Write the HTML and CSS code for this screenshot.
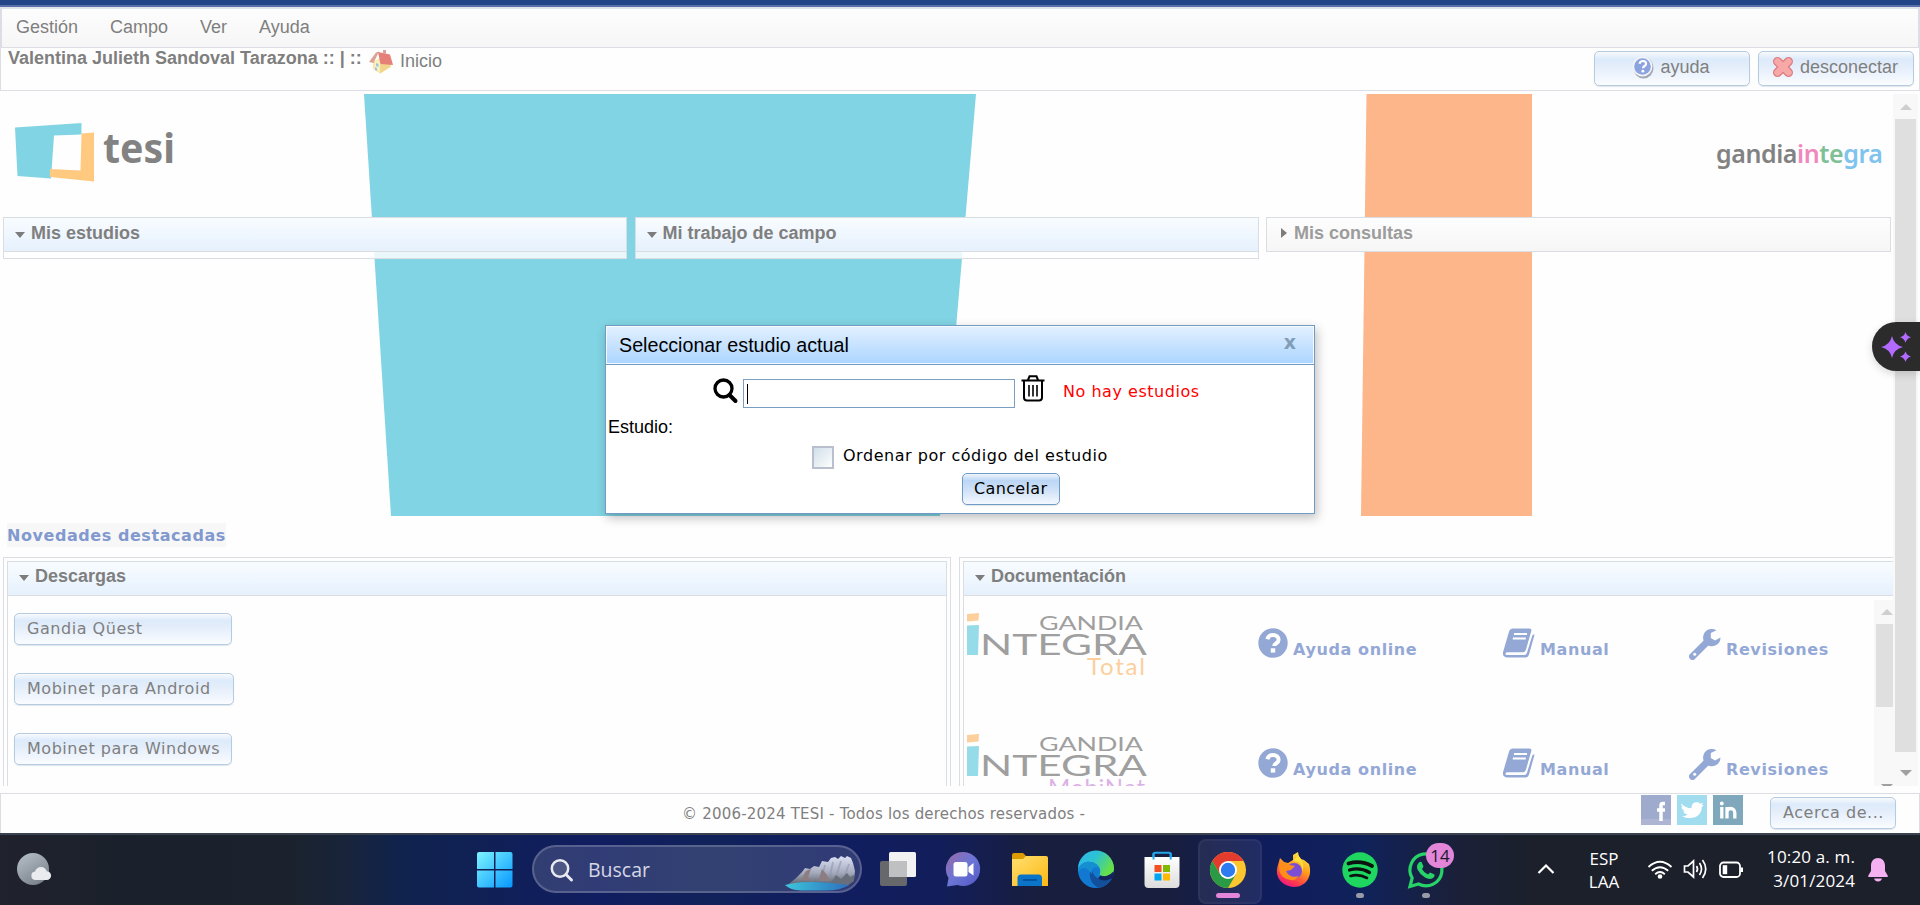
FILE: index.html
```
<!DOCTYPE html>
<html lang="es">
<head>
<meta charset="utf-8">
<title>TESI - Gandia Integra</title>
<link rel="stylesheet" href="styles.css">
</head>
<body>
<svg class="defs" width="0" height="0">
  <defs>
    <linearGradient id="winG" x1="0" y1="0" x2="1" y2="1"><stop offset="0" stop-color="#7df5ff"/><stop offset="1" stop-color="#0697ff"/></linearGradient>
    <linearGradient id="moonG" x1="0" y1="0" x2="0.6" y2="1"><stop offset="0" stop-color="#b9c2cc"/><stop offset="1" stop-color="#7c838c"/></linearGradient>
    <linearGradient id="chatG" x1="0" y1="0" x2="1" y2="1"><stop offset="0" stop-color="#9a6aa8"/><stop offset=".5" stop-color="#6b76d6"/><stop offset="1" stop-color="#5455c4"/></linearGradient>
    <linearGradient id="foldG" x1="0" y1="0" x2="1" y2="1"><stop offset="0" stop-color="#ffe071"/><stop offset="1" stop-color="#fdb813"/></linearGradient>
    <linearGradient id="edgeG" x1="0" y1="0" x2="1" y2=".5"><stop offset="0" stop-color="#2fb4f0"/><stop offset=".5" stop-color="#2cc3d3"/><stop offset="1" stop-color="#66e048"/></linearGradient>
    <linearGradient id="storeG" x1="0" y1="0" x2="0" y2="1"><stop offset="0" stop-color="#ffffff"/><stop offset="1" stop-color="#dcdcdc"/></linearGradient>
    <linearGradient id="ffG" x1=".8" y1="0" x2=".3" y2="1"><stop offset="0" stop-color="#fff04a"/><stop offset=".45" stop-color="#ff9a1c"/><stop offset=".8" stop-color="#ff3a4c"/><stop offset="1" stop-color="#e8168b"/></linearGradient>
    <linearGradient id="rockG" x1="0" y1="0" x2="0" y2="1"><stop offset="0" stop-color="#dde0f4"/><stop offset=".55" stop-color="#a6acbd"/><stop offset="1" stop-color="#565b66"/></linearGradient>
    <linearGradient id="lakeG" x1="0" y1="0" x2="1" y2="0"><stop offset="0" stop-color="#3cc6dc"/><stop offset="1" stop-color="#2e6fbe"/></linearGradient>

    <symbol id="i-help" viewBox="0 0 30 30"><circle cx="15" cy="15" r="14.7" fill="#94a8d6"/><path d="M9.4 11.2C10.2 8.2 12.2 7 15 7c3.200 0 5.600 1.900 5.600 4.700 0 3.700-4.300 3.700-4.300 6.300" fill="none" stroke="#fff" stroke-width="4"/><rect x="12.800" y="20.300" width="4.400" height="4.300" fill="#fff"/></symbol>
    <symbol id="i-book" viewBox="0 0 32 30"><path d="M9.500 .5H26.500q2.500 0 1.800 2.500L23 21.500q-.8 2.700-3.500 2.700H4q-1.500 0-1.500 1.500t1.500 1.300H21.500q1.800 0 2.400-2L29.300 7.500l1.900-1.500q.3.800 0 2L26 26.500q-.8 3-3.700 3H4.200Q-.5 29-.1 24.500L6.200 3q.9-2.500 3.300-2.500z" fill="#94a8d6"/><path d="M11 6H24M9.800 10.500H22.800" stroke="#fff" stroke-width="2"/></symbol>
    <symbol id="i-wrench" viewBox="0 0 32 32"><path d="M3.500 28.500L18 14" stroke="#94a8d6" stroke-width="6.800" stroke-linecap="round"/><path d="M27.500 2.300A8.700 8.700 0 1 0 31.500 9.500L26 12.500 21.800 10V5z" fill="#94a8d6"/><circle cx="5.700" cy="26.300" r="1.500" fill="#fff"/></symbol>
  </defs>
</svg>

<div class="page">
  <div class="topline"></div>
  <nav class="menubar">
    <a class="m1">Gestión</a><a class="m2">Campo</a><a class="m3">Ver</a><a>Ayuda</a>
  </nav>
  <header class="userbar">
    <strong class="user">Valentina Julieth Sandoval Tarazona :: | ::</strong>
    <a class="home">
      <svg width="25" height="25" viewBox="0 0 25 25"><path d="M4 12L11 8 22 13V17L11 23.500 4 19z" fill="#f8e6a4"/><path d="M11 14L21 12V17L11 23.500z" fill="#f2d58c"/><path d="M0 12L7 2.500 10 1.500 4.500 13z" fill="#dba295"/><path d="M9 2L21 4.500 24 15 11.500 14z" fill="#e57f78"/><path d="M14 0h3v4l-3-.5z" fill="#d8a39b"/><path d="M5.500 13L9 9l2 5v8l-5.500-3z" fill="#fbf0bf"/><path d="M7 13l2.500 1v3L7 16zM6 17l2 1v3l-2-1z" fill="#9dc4e4"/></svg>
      <span>Inicio</span>
    </a>
    <div class="userbar-actions">
      <button class="btn big">
        <svg width="22" height="24" viewBox="0 0 22 24"><ellipse cx="11.500" cy="13" rx="10" ry="10.500" fill="#a2a8b2"/><circle cx="10.500" cy="11.500" r="10" fill="#f0f3f8"/><circle cx="10.500" cy="11.500" r="8.300" fill="#8da3e0"/><path d="M7.500 8.800C8 6.500 9.200 6 10.800 6c2 0 3.300 1 3.300 2.700 0 2.300-3.100 2.300-3.100 4.500" fill="none" stroke="#fff" stroke-width="2.200"/><circle cx="10.900" cy="16.200" r="1.400" fill="#fff"/></svg>
        <span>ayuda</span>
      </button>
      <button class="btn big">
        <svg width="22" height="22" viewBox="0 0 22 22"><path d="M5.500 5.500L16.500 16.500M16.500 5.500L5.500 16.500" stroke="#dc7b80" stroke-width="9" stroke-linecap="round"/><path d="M5.500 5.500L16.500 16.500M16.500 5.500L5.500 16.500" stroke="#f8a9a7" stroke-width="6.500" stroke-linecap="round"/></svg>
        <span>desconectar</span>
      </button>
    </div>
  </header>

  <main class="viewport">
    <div class="content">
      <section class="banner">
        <svg class="shapes" width="1893" height="422" viewBox="0 0 1893 422"><path d="M364 0H976L940 422H391z" fill="#81d4e3"/><path d="M1366.500 0H1532V422H1361z" fill="#fdb58a"/></svg>
        <div class="brands">
          <svg width="180" height="64" viewBox="0 0 180 64"><path d="M0 4.500L66.500 0V11.500L39 12.500 36 55.500 2.500 53z" fill="#81d4e3"/><path d="M66.500 10.500L79 9.500V58.500L35 54V46L65.500 47.500z" fill="#ffca80"/><text x="88" y="40" class="tesi" textLength="72" lengthAdjust="spacingAndGlyphs">tesi</text></svg>
          <svg class="gi" width="170" height="36" viewBox="0 0 170 36"><text x="0" y="25" class="gandia" textLength="167" lengthAdjust="spacing"><tspan fill="#828282">gandia</tspan><tspan fill="#f087bd">in</tspan><tspan fill="#80c097">te</tspan><tspan fill="#80c3ee">gra</tspan></text></svg>
        </div>
        <div class="panels">
          <div class="panel"><h3><i class="down"></i>Mis estudios</h3><div class="empty"></div></div>
          <div class="panel"><h3><i class="down"></i>Mi trabajo de campo</h3><div class="empty"></div></div>
          <div class="panel closed"><h3><i class="right"></i>Mis consultas</h3></div>
        </div>
      </section>
      <div class="newsrow"><b class="news">Novedades destacadas</b></div>
      <section class="columns">
        <div class="frame left">
          <div class="inner">
            <h3><i class="down"></i>Descargas</h3>
            <div class="downloads">
              <button class="btn w218">Gandia Qüest</button>
              <button class="btn w220">Mobinet para Android</button>
              <button class="btn w218">Mobinet para Windows</button>
            </div>
          </div>
        </div>
        <div class="frame rightf">
          <div class="inner">
            <h3><i class="down"></i>Documentación</h3>
            <div class="docs">
              <div class="doclist">
                <div class="doc">
                  <svg class="logo" width="184" height="66" viewBox="0 0 184 66"><path d="M0 1L12 0 11.500 7.500 0 8.500z" fill="#fccf9d"/><path d="M0 12.500L12 12 11 42H0z" fill="#96dbe8"/><text x="72" y="17" class="lg" font-size="18.500" textLength="104" lengthAdjust="spacingAndGlyphs">GANDIA</text><text x="13" y="42" class="lg" font-size="29" textLength="167" lengthAdjust="spacingAndGlyphs">NTEGRA</text><text x="120" y="62" class="sub" fill="#fccf9d" textLength="58">Total</text></svg>
                  <a class="l1"><svg width="30" height="30"><use href="#i-help"/></svg>Ayuda online</a>
                  <a class="l2"><svg width="32" height="30"><use href="#i-book"/></svg>Manual</a>
                  <a class="l3"><svg width="32" height="32"><use href="#i-wrench"/></svg>Revisiones</a>
                </div>
                <div class="doc">
                  <svg class="logo second" width="184" height="66" viewBox="0 0 184 66"><path d="M0 1L12 0 11.500 7.500 0 8.500z" fill="#fccf9d"/><path d="M0 12.500L12 12 11 42H0z" fill="#96dbe8"/><text x="72" y="17" class="lg" font-size="18.500" textLength="104" lengthAdjust="spacingAndGlyphs">GANDIA</text><text x="13" y="42" class="lg" font-size="29" textLength="167" lengthAdjust="spacingAndGlyphs">NTEGRA</text><text x="81" y="62" class="sub" fill="#dcb2e6" textLength="97">MobiNet</text></svg>
                  <a class="l1"><svg width="30" height="30"><use href="#i-help"/></svg>Ayuda online</a>
                  <a class="l2"><svg width="32" height="30"><use href="#i-book"/></svg>Manual</a>
                  <a class="l3"><svg width="32" height="32"><use href="#i-wrench"/></svg>Revisiones</a>
                </div>
              </div>
              <div class="scroll small"><i class="up"></i><div class="thumb"></div><i class="dn"></i></div>
            </div>
          </div>
        </div>
      </section>
    </div>
    <div class="scroll"><i class="up"></i><div class="thumb"></div><i class="dn"></i></div>
  </main>

  <footer class="foot">
    <span class="copy">© 2006-2024 TESI - Todos los derechos reservados -</span>
    <div class="social">
      <svg width="30" height="30"><rect width="30" height="30" fill="#9fabcd"/><rect y="24" width="30" height="6" fill="#adb5d2"/><path d="M24 8.500h-2.500q-1.500 0-1.500 2V26M16 15h8" stroke="#fff" stroke-width="3.500" fill="none"/></svg>
      <svg width="30" height="30"><rect width="30" height="30" fill="#a1dcef"/><path d="M4.500 8.500c3 3.500 6 4.500 10 4.800 0-4 2-6 5-6 1.500 0 2.700.5 3.500 1.400l3-1-1.300 2.600 2-.3-2 2.200c.2 8-8 14-20 9 2.500 0 4.500-.6 6-1.800-2.500-.2-3.800-1.300-4.400-3.100h2C6 15.500 4.500 14 4.500 11.500l1.500.5c-1.500-1-2-2.500-1.500-3.500z" fill="#fff"/></svg>
      <svg width="30" height="30"><rect width="30" height="30" fill="#80a8bd"/><path d="M8.800 12V23.500M14 12V23.500M14 17c0-2.500 1.500-3.500 3.700-3.500S21.800 15 21.800 18V23.500" stroke="#fff" stroke-width="3.300" fill="none"/><circle cx="8.800" cy="8.500" r="1.900" fill="#fff"/></svg>
    </div>
    <button class="btn about">Acerca de...</button>
  </footer>
</div>

<section class="dialog">
  <div class="dlg-title"><span>Seleccionar estudio actual</span><b>x</b></div>
  <div class="dlg-search">
    <svg width="25" height="26" viewBox="0 0 25 26"><circle cx="10.500" cy="10.500" r="8.500" fill="none" stroke="#000" stroke-width="3.300"/><path d="M16.500 17L22.500 23" stroke="#000" stroke-width="4" stroke-linecap="round"/></svg>
    <div class="field"><i></i></div>
    <svg class="trash" width="24" height="27" viewBox="0 0 24 27"><path d="M.5 5.500H23.500M7 5L8.500 1.300H15.500L17 5M3 6V22.500Q3 25.500 6 25.500H18Q21 25.500 21 22.500V6" fill="none" stroke="#000" stroke-width="2"/><path d="M8 10V21.500M12 10V21.500M16 10V21.500" stroke="#000" stroke-width="1.600"/></svg>
    <span class="none">No hay estudios</span>
  </div>
  <div class="dlg-label">Estudio:</div>
  <label class="dlg-check"><i></i><span>Ordenar por código del estudio</span></label>
  <div class="dlg-actions"><button class="btn solid">Cancelar</button></div>
</section>

<div class="ai-tab"><svg width="36" height="32" viewBox="0 0 36 32"><path d="M12 5Q14 14 23 16 14 18 12 27 10 18 1 16 10 14 12 5zM25.500 1Q26.700 5.200 31 6.300 26.700 7.500 25.500 11.700 24.300 7.500 20 6.300 24.300 5.200 25.500 1zM25.500 20.300Q26.700 24.500 31 25.600 26.700 26.800 25.500 31 24.300 26.800 20 25.600 24.300 24.500 25.500 20.300z" fill="#b36bff"/></svg></div>

<div class="taskbar">
  <svg class="weather" width="36" height="34" viewBox="0 0 36 34"><circle cx="16" cy="16" r="16" fill="url(#moonG)"/><path d="M18 27a4.300 4.300 0 0 1 0-8.500c1-3 3-4.500 6-4.500s5 1.700 5.700 4.200a4.400 4.400 0 0 1 0 8.800z" fill="#e9ebee"/></svg>
  <svg class="win" width="36" height="36" viewBox="0 0 36 36"><path d="M2 0H17V17H0V2q0-2 2-2zM18.500 0H33.500q2 0 2 2V17H18.500zM0 18.500H17V35.500H2q-2 0-2-2zM18.500 18.500H35.500V33.500q0 2-2 2H18.500z" fill="url(#winG)"/></svg>
  <div class="search">
    <svg width="24" height="24" viewBox="0 0 24 24"><circle cx="10" cy="9.500" r="8.200" fill="#ffffff22" stroke="#e8eaf0" stroke-width="2.500"/><path d="M16 15.500L21.500 21" stroke="#e8eaf0" stroke-width="3" stroke-linecap="round"/></svg>
    <span>Buscar</span>
    <svg class="mount" width="72" height="36" viewBox="0 0 72 36"><path d="M1 31L10 24 17 17 20 13 25 14 29 11 34 12 37 6 43 7 46 3 50 2 53 4 56 1 60 3 62 1 66 3 68 8 70 16 69 25 62 31z" fill="url(#rockG)"/><path d="M40 10l-3 12M48 7l-3 14M56 6l-4 13M64 9l-5 14" stroke="#8d95b0" stroke-opacity=".6" stroke-width="1.800"/><path d="M16 25l5-9 5-2-3 8 6 4zM33 26l4-12 5 6 3 6z" fill="#8c7d82"/><path d="M46 28l5-8 5 4 6-6 3 4 4-2v6l-7 5H46z" fill="#686e7a"/><path d="M0 30Q20 24 64 30 56 35.500 40 35.500H16Q5 35 0 30z" fill="url(#lakeG)"/></svg>
  </div>
  <div class="apps">
    <svg width="36" height="36" viewBox="0 0 36 36"><rect x="0" y="9" width="27" height="25" rx="2" fill="#66686c"/><rect x="9" y="0" width="27" height="25" rx="1.500" fill="#f2f2f3"/><path d="M9 9H27V25H9z" fill="#bfc0c2"/></svg>
    <svg width="36" height="36" viewBox="0 0 36 36"><path d="M17.500 0a17 17 0 1 1-6 33L1 34.500 2.500 26A17 17 0 0 1 17.500 0z" fill="url(#chatG)"/><rect x="7.500" y="10" width="14" height="14.500" rx="2.500" fill="#fff"/><path d="M22.500 15L27.500 11V23.500L22.500 20z" fill="#fff"/></svg>
    <svg width="36" height="36" viewBox="0 0 36 36"><path d="M0 3q0-2 2-2H11l4 4V11H0z" fill="#dd9a02"/><path d="M0 7H11l3-3H34q2 0 2 2V34H0z" fill="url(#foldG)"/><path d="M5.500 34V26q0-3.500 3.500-3.500H26.500q3.500 0 3.500 3.500V34z" fill="#0a74c9"/><path d="M11 28H25" stroke="#0453a0" stroke-width="2"/></svg>
    <svg width="36" height="36" viewBox="0 0 36 36"><circle cx="18" cy="18" r="18" fill="#1279d3"/><path d="M0 17A18 18 0 0 1 36 16C36.500 23 29 26 22.500 23.500 20.500 22.500 23 21 22 17.500 20 10 6 5 0 17z" fill="url(#edgeG)"/><path d="M14 16C9 22 13 33 21 35.800 27 35 31 31 33 27 26 30 14 27 14 16z" fill="#134f9b"/><path d="M22.500 23.500q6 2.700 13-4l.5 6.500-3 1q-7 3-13-.5z" fill="#14235a"/><path d="M0 17C5 6 20 9 22 17 18 13 13 16 14 22 8 15 5 14 0 20z" fill="#168fd2"/></svg>
    <svg width="36" height="36" viewBox="0 0 36 36"><path d="M9.500 8V2.500q0-1.700 1.700-1.700H25q1.700 0 1.700 1.700V8" fill="none" stroke="#21a7ee" stroke-width="2"/><path d="M.5 5H35.500V32q0 4-4 4H4.500q-4 0-4-4z" fill="url(#storeG)"/><path d="M9.500 1V7.500M26.700 1V7.500" stroke="#21a7ee" stroke-width="2"/><path d="M10.500 13h7v7h-7z" fill="#f25022"/><path d="M19 13h7v7h-7z" fill="#7fba00"/><path d="M10.500 21.500h7v7h-7z" fill="#00a4ef"/><path d="M19 21.500h7v7h-7z" fill="#ffb900"/></svg>
    <div class="active"><svg width="36" height="36" viewBox="0 0 36 36"><circle cx="18" cy="18" r="18" fill="#fdc62f"/><path d="M18 9H33.600A18 18 0 0 0 2.400 9L10.200 22.500z" fill="#e33b2e"/><path d="M2.400 9A18 18 0 0 0 18 36L25.800 22.500 10.200 22.500z" fill="#2b9a47"/><circle cx="18" cy="18" r="9" fill="#fff"/><circle cx="18" cy="18" r="7.200" fill="#2e7bef"/></svg><i></i></div>
    <svg width="36" height="36" viewBox="0 0 36 36"><path d="M4 6L8 10 12 11 17 8 17 3 22 0Q22 4 25 7L28 8 33 12C37 24 30 35 18 35 5 34-2 24 2 13z" fill="url(#ffG)"/><circle cx="18" cy="19" r="8" fill="#7a4fd6"/><path d="M3 12q6-2 11 1l5 1-4 4-5 1q4 8 13 5-6 8-16 1Q2 20 3 12z" fill="#ff8d1a"/><path d="M17 9Q27 9 26 20q4-8-4-17z" fill="#ffdf3c"/></svg>
    <div class="run"><svg width="36" height="36" viewBox="0 0 36 36"><circle cx="18" cy="18" r="17.700" fill="#1fd760"/><path d="M6.500 11.500Q19 8 30 14" fill="none" stroke="#0b1310" stroke-width="3.800" stroke-linecap="round"/><path d="M7.500 18Q18 15 27.500 20.500" fill="none" stroke="#0b1310" stroke-width="3.200" stroke-linecap="round"/><path d="M8.500 24Q17 21.500 25 26" fill="none" stroke="#0b1310" stroke-width="2.600" stroke-linecap="round"/></svg><i></i></div>
    <div class="run"><svg width="36" height="36" viewBox="0 0 36 36"><path d="M2 34.500L4.200 26A16 16 0 1 1 10.500 32z" fill="none" stroke="#27d367" stroke-width="3.200"/><path d="M11 10.500q1-1 2.500-.5l2 4.500-1.500 2.500q2 4 6 5.500l2-2 4.500 2q.5 2-1.500 3.500-3.500 2-8-.5-5-3-7.500-8-1.500-4.500 1.500-7z" fill="#27d367"/></svg><i></i><b class="badge">14</b></div>
  </div>
  <svg class="chev" width="18" height="12" viewBox="0 0 18 12"><path d="M1.500 10L9 2.500 16.500 10" fill="none" stroke="#fff" stroke-width="2.200"/></svg>
  <div class="lang">ESP<br>LAA</div>
  <svg class="wifi" width="26" height="20" viewBox="0 0 26 20"><path d="M1.500 7Q13-3.500 24.500 7M4.800 10.800Q13 3.500 21.200 10.800M8.200 14.200Q13 10 17.800 14.200" fill="none" stroke="#fff" stroke-width="1.900"/><circle cx="13" cy="16.500" r="2.300" fill="#fff"/></svg>
  <svg class="vol" width="26" height="22" viewBox="0 0 26 22"><path d="M1.500 8H5L10.500 3V19L5 14H1.500zM13.500 8q2 3 0 6M16.500 5q4 6 0 12M19.500 2q6.500 9 0 18" fill="none" stroke="#fff" stroke-width="1.700"/></svg>
  <svg class="bat" width="26" height="18" viewBox="0 0 26 18"><rect x="1" y="1.500" width="20" height="14.500" rx="3.500" fill="none" stroke="#fff" stroke-width="1.800"/><rect x="3.700" y="4.200" width="4.500" height="9" fill="#fff"/><path d="M21.500 6.500h2.500v4.500h-2.500z" fill="#fff"/></svg>
  <div class="clock">10:20 a. m.<br>3/01/2024</div>
  <svg class="bell" width="20" height="24" viewBox="0 0 20 24"><path d="M10 0C14 0 17 3 17 7.500V13L19.700 17.500V19H.3V17.500L3 13V7.500C3 3 6 0 10 0zM6 20.500H14Q13 23.500 10 23.500T6 20.500z" fill="#f4b0f0"/></svg>
</div>
</body>
</html>
```
FILE: styles.css
```
* { box-sizing: border-box; }
body {
  margin: 0;
  position: relative;
  width: 1920px;
  height: 905px;
  overflow: hidden;
  background: #fefefe;
  color: #7f7f7f;
  font-family: "Liberation Sans", Arial, sans-serif;
  font-size: 18px;
}
svg { display: block; flex: none; overflow: visible; }
.defs { position: absolute; }
.page { display: flex; flex-direction: column; height: 833px; }

/* top navigation */
.topline { height: 9px; background: linear-gradient(#244688 0 5px, #5b6fa8 5px 7px, #dfe3ea 7px); }
.menubar {
  display: flex;
  height: 39px;
  padding: 8px 0 0 14px;
  background: linear-gradient(#fdfdfd, #f6f6f6);
  border: solid #dcdee3;
  border-width: 0 2px 1px;
  line-height: 20px;
}
.m1 { width: 94px; }
.m2 { width: 90px; }
.m3 { width: 59px; }
.userbar {
  display: flex;
  height: 43px;
  padding: 0 5px 0 7px;
  border: solid #dcdee3;
  border-width: 0 1px 1px;
}
.user { line-height: 21px; width: 361px; white-space: nowrap; }
.home { display: flex; gap: 6px; padding-top: 2px; }
.home span { line-height: 20px; padding-top: 1px; }
.userbar-actions { display: flex; gap: 8px; margin-left: auto; padding-top: 3px; }

.btn {
  display: flex;
  height: 32px;
  padding: 0 11px 2px 12px;
  align-items: center;
  border: 1px solid #b5cbe0;
  border-radius: 5px;
  background: linear-gradient(#f8fafd, #dceafa 22%, #e6effb 50%, #fafcff);
  box-shadow: 0 1px 1px #e2e6ea;
  color: #7f7f7f;
  font: 16px "DejaVu Sans", Verdana, sans-serif;
  letter-spacing: 0.54px;
  white-space: nowrap;
}
.btn.big { width: 156px; height: 35px; padding: 0 13px 2px 11px; justify-content: center; gap: 6px; font: 18px "Liberation Sans", Arial, sans-serif; letter-spacing: 0; }
.btn.big svg { margin-top: -2px; }
.w218 { width: 218px; }
.w220 { width: 220px; }

/* scroll area */
.viewport { display: flex; height: 702px; padding: 3px 1px 7px 0; }
.content { width: 1893px; overflow: hidden; }
.scroll {
  display: flex;
  flex-direction: column;
  width: 25px;
  padding: 10px 2px 10px;
  background: #f8f8f8;
  align-items: center;
}
.scroll .up, .scroll .dn { width: 0; border: 6px solid transparent; border-top: 0; border-bottom: 6px solid #cfcfcf; }
.scroll .dn { border-top: 6px solid #a0a0a0; border-bottom: 0; margin-top: auto; }
.scroll .thumb { width: 21px; height: 633px; margin-top: 9px; background: #dfdfdf; }

.banner { position: relative; height: 422px; }
.shapes { position: absolute; left: 0; top: 0; }
.brands { position: relative; display: flex; justify-content: space-between; height: 123px; padding: 29px 7px 0 15px; }
.gi { margin-top: 15px; }
.tesi { font: bold 42px "Noto Sans", sans-serif; fill: #828282; }
.gandia { font: 600 25px "Noto Sans", sans-serif; }
.panels { position: relative; display: grid; grid-template-columns: 624px 624px 625px; gap: 7.5px; padding-left: 3px; align-items: start; }
h3 {
  display: flex;
  margin: 0;
  height: 35px;
  padding: 5px 0 0 11px;
  gap: 6px;
  border: 1px solid #dadde2;
  background: linear-gradient(#f8fcff, #e6f1fd);
  font-size: 18px;
  line-height: 20px;
}
h3 .down { border: 5.5px solid transparent; border-top: 6px solid #7c7c7c; border-bottom: 0; height: 0; margin-top: 9px; }
h3 .right { border: 5.5px solid transparent; border-left: 6px solid #7c7c7c; border-right: 0; margin: 5px 1px 0 3px; height: 0; }
.empty { height: 7px; background: #ffffffd5; border: 1px solid #dadde2; border-top: 0; }
.closed h3 { background: linear-gradient(#fdfdfd, #f6f6f6); color: #9c9c9c; }

.newsrow { height: 41px; padding: 7px 0 0 7px; display: flex; }
.news { height: 24px; background: #f7f7f7; color: #8199cf; font: bold 16px/25px "DejaVu Sans", Verdana, sans-serif; letter-spacing: 0.56px; white-space: nowrap; }

.columns { display: flex; gap: 7px; padding-left: 3px; height: 400px; }
.frame { border: 1px solid #dadde2; padding: 3px; flex: none; }
.left { width: 948px; }
.rightf { width: 949px; margin-left: 1px; }
.inner { border: 1px solid #dadde2; height: 600px; }
.inner h3 { border-width: 0 0 1px; height: 34px; padding-top: 4px; }
.downloads { display: flex; flex-direction: column; gap: 28px; padding: 17px 0 0 6px; }
.docs { display: flex; padding-top: 4px; height: 204px; }
.doclist { width: 910px; }
.doc { display: flex; height: 120px; padding: 13px 0 0 3px; color: #94a8d6; font: bold 16px "DejaVu Sans", Verdana, sans-serif; letter-spacing: 0.6px; }
.doc a { display: flex; gap: 5px; height: 60px; padding-top: 16px; align-items: flex-start; line-height: 41px; white-space: nowrap; }
.doc a svg { margin-top: -1px; }
.l1 { width: 245px; }
.l2 { width: 186px; }
.logo { margin-right: 107px; letter-spacing: 0; }
.second { margin-top: 1px; }
.lg { font-family: Lato, sans-serif; font-weight: 400; fill: #9f9f9f; }
.sub { font: 24px Lato, sans-serif; }
.scroll.small { height: 200px; padding-top: 9px; }
.small .thumb { height: 83px; }

.foot {
  display: flex;
  height: 40px;
  padding: 1px 23px 0 681px;
  border: solid #dcdee3;
  border-width: 1px 1px 0;
}
.copy { width: 959px; font: 15px/38px "DejaVu Sans", Verdana, sans-serif; letter-spacing: 0.2px; white-space: nowrap; }
.social { display: flex; gap: 6px; }
.about { width: 126px; margin: 2px 0 0 27px; }

/* dialog */
.dialog {
  position: absolute;
  left: 605px;
  top: 325px;
  width: 710px;
  height: 189px;
  border: 1px solid #6f9bc4;
  background: #fff;
  box-shadow: 2px 4px 10px #00000040;
  color: #000;
}
.dlg-title {
  display: flex;
  justify-content: space-between;
  height: 39px;
  padding: 7px 18px 0 13px;
  border-bottom: 1px solid #6f9bc4;
  background: linear-gradient(#e3f0ff, #abd5ff);
  box-shadow: inset 0 0 0 1px #f4faff;
  font-size: 19.7px;
  line-height: 24px;
}
.dlg-title b { color: #819db8; font: bold 19px/19px "DejaVu Sans", sans-serif; }
.dlg-search { display: flex; height: 47px; padding: 13px 0 0 107px; }
.field { width: 272px; height: 29px; margin: 1px 0 0 5px; border: 1px solid #7a9fc2; padding: 4px 3px; }
.field i { display: block; width: 1px; height: 20px; background: #000; }
.trash { margin: -3px 0 0 6px; }
.none, .dlg-check { font: 16px "DejaVu Sans", Verdana, sans-serif; letter-spacing: 0.53px; }
.none { color: #f00; margin: 4px 0 0 18px; }
.dlg-label { padding: 5px 0 0 2px; height: 34px; line-height: 20px; }
.dlg-check { display: flex; gap: 9px; padding-left: 206px; height: 27px; }
.dlg-check i { width: 22px; height: 23px; border: 2px solid #b9bfcc; background: linear-gradient(135deg, #d0dfe9, #fdfefe); }
.dlg-actions { padding: 0 0 0 356px; }
.solid { height: 32px; width: 98px; padding-left: 11px; letter-spacing: 0.35px; color: #000; border-color: #6f9bc4; background: linear-gradient(#f0f5fc, #bcd6f5 22%, #d0e2f7 55%, #f4f8fe); }

.ai-tab {
  position: absolute;
  left: 1872px;
  top: 322px;
  width: 48px;
  height: 49px;
  padding: 9px 0 0 8px;
  border-radius: 25px 0 0 25px;
  background: #2b2b2b;
  box-shadow: 0 3px 8px #00000026;
}

/* taskbar */
.taskbar {
  display: flex;
  align-items: flex-start;
  height: 72px;
  padding: 0 0 0 17px;
  border-top: 2px solid #3c4350;
  background: linear-gradient(90deg, #20222c 0, #1b212c 6%, #1b222d 15%, #18243a 18%, #10234e 21%, #101d60 31%, #11225a 37%, #101d60 43%, #121e5a 49%, #181e3e 54%, #181e3e 61%, #101d5c 66%, #10225a 71%, #1b2038 76%, #1b202b 80%, #1c202a);
  color: #fff;
  font-family: "Open Sans", "Noto Sans", sans-serif;
}
.weather { margin-top: 18px; }
.win { margin: 17px 0 0 424px; }
.search {
  display: flex;
  width: 330px;
  height: 48px;
  margin: 10px 0 0 19px;
  padding: 12px 3px 0 16px;
  border: 2px solid #ffffff30;
  border-radius: 24px;
  background: #ffffff24;
}
.search span { margin-left: 14px; font-size: 19.5px; line-height: 22px; color: #d5d8e4; width: 64px; }
.mount { margin: -4px 0 0 auto; }
.apps { display: flex; gap: 30px; margin: 17px 0 0 18px; }
.active, .run { position: relative; width: 36px; height: 36px; }
.active::before { content: ""; position: absolute; left: -12px; top: -13px; width: 60px; height: 61px; border-radius: 8px; background: #ffffff12; border: 2px solid #ffffff0a; }
.active svg { position: relative; }
.active i, .run i { position: absolute; left: 14px; top: 41px; width: 8px; height: 5px; border-radius: 3px; background: #989ba5; }
.active i { left: 6px; width: 24px; background: #e386d9; }
.badge { position: absolute; left: 18px; top: -9px; width: 28px; height: 25px; border-radius: 13px; background: #e386d9; color: #191a2b; font-size: 17px; font-weight: 400; line-height: 25px; text-align: center; }
.chev { margin: 28px 0 0 93px; }
.lang { width: 44px; margin: 12px 0 0 27px; text-align: center; font-size: 17px; line-height: 23px; }
.wifi { margin: 25px 0 0 21px; }
.vol { margin: 23px 0 0 10px; }
.bat { margin: 26px 0 0 10px; }
.clock { width: 110px; margin: 10px 0 0 0; text-align: right; font-size: 17px; line-height: 24px; letter-spacing: 0.15px; white-space: nowrap; }
.bell { margin: 23px 0 0 13px; }
```
